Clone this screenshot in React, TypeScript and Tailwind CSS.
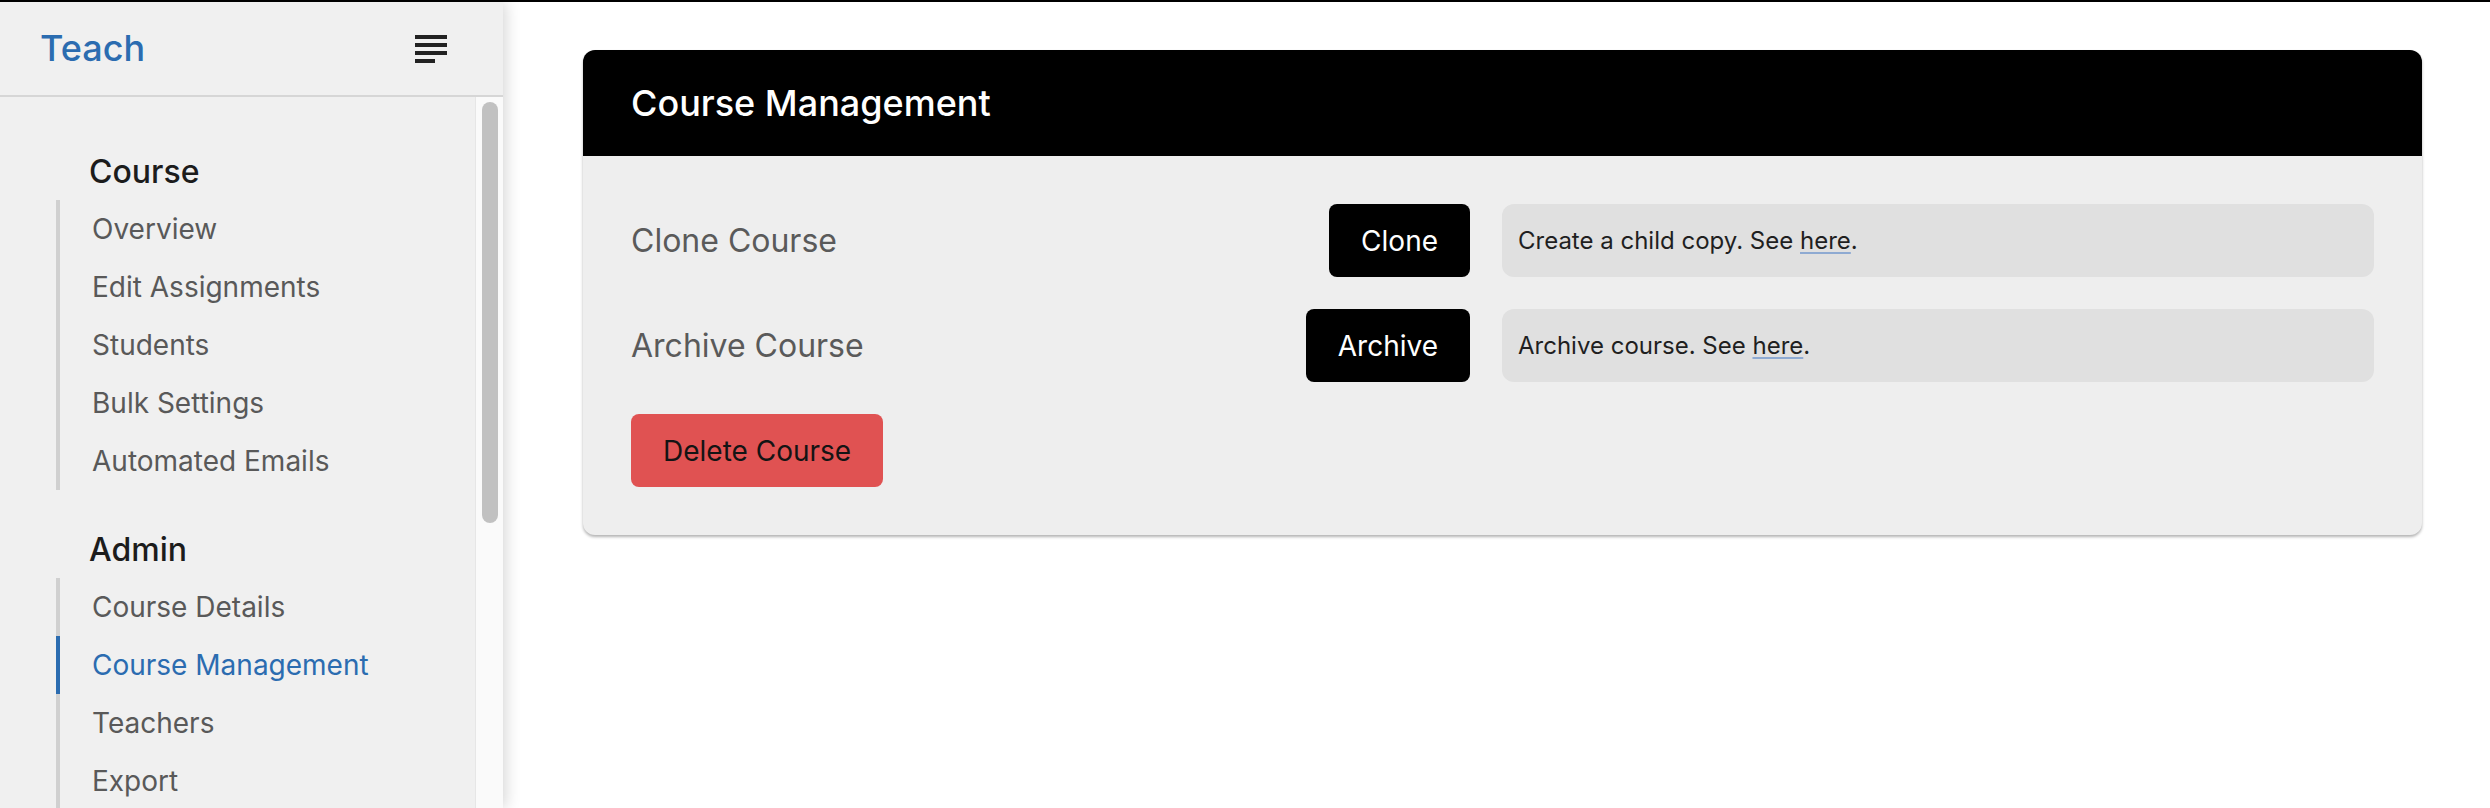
import type { ReactNode } from "react"

const courseLinks = ["Overview", "Edit Assignments", "Students", "Bulk Settings", "Automated Emails"]
const adminLinks = ["Course Details", "Course Management", "Teachers", "Export"]

function SubjectIcon() {
  return (
    <svg viewBox="0 0 24 24" className="h-12 w-12 fill-[#222]">
      <path d="M14 17H4v2h10v-2zm6-8H4v2h16V9zM4 15h16v-2H4v2zM4 5v2h16V5H4z" />
    </svg>
  )
}

function NavSection(props: { title: string; links: string[]; active?: string; first?: boolean }) {
  return (
    <div className={props.first ? "" : "mt-[40px]"}>
      <h2 className="mb-[8px] pl-[33px] text-[32px] leading-[40px] font-medium text-[#1c1c1c]">{props.title}</h2>
      <ul>
        {props.links.map((link) => {
          const active = link === props.active
          return (
            <li
              key={link}
              className={`border-l-4 pl-[32px] text-[28px] leading-[58px] ${active ? "border-[#2b6cb0] text-[#2b6cb0]" : "border-[#d0d0d0] text-[#595959]"}`}
            >
              {link}
            </li>
          )
        })}
      </ul>
    </div>
  )
}

function Sidebar() {
  return (
    <aside className="relative z-10 flex w-[503px] shrink-0 flex-col bg-[#f0f0f0] shadow-[3px_0_14px_rgba(0,0,0,0.16)]">
      <div className="flex h-[95px] shrink-0 items-center justify-between border-b-2 border-[#d6d6d6] pr-[48px] pl-[40px]">
        <span className="-mt-[2px] text-[36px] font-medium text-[#2b6cb0]">Teach</span>
        <SubjectIcon />
      </div>
      <div className="flex min-h-0 flex-1">
        <nav className="flex-1 overflow-hidden pt-[55px] pl-[56px]">
          <NavSection title="Course" links={courseLinks} first />
          <NavSection title="Admin" links={adminLinks} active="Course Management" />
        </nav>
        <div className="w-[28px] shrink-0 border-l border-[#e6e6e6] bg-[#fafafa] pt-[5px]">
          <div className="mx-auto h-[421px] w-[16px] rounded-full bg-[#c1c1c1]" />
        </div>
      </div>
    </aside>
  )
}

function ActionRow(props: { label: string; button: string; children: ReactNode }) {
  return (
    <div className="flex items-center gap-8">
      <span className="flex-1 text-[32px] text-[#5a5a5a]">{props.label}</span>
      <button type="button" className="h-[73px] rounded-lg bg-black px-8 text-[28px] text-white">
        {props.button}
      </button>
      <div className="flex h-[73px] w-[872px] items-center rounded-xl bg-[#e0e0e0] px-4 text-[24px] text-[#1f1f1f]">
        <p>{props.children}</p>
      </div>
    </div>
  )
}

function HereLink() {
  return <a className="underline decoration-[#8eaad2] decoration-2 underline-offset-[3px]">here</a>
}

export default function App() {
  return (
    <div className="flex h-[808px] overflow-hidden border-t-2 border-black bg-white font-['Inter','Liberation_Sans',sans-serif]">
      <Sidebar />
      <main className="flex-1 pt-[48px] pr-[68px] pl-[80px]">
        <section className="rounded-xl bg-[#eeeeee] shadow-[0_2px_3px_rgba(0,0,0,0.3)]">
          <header className="flex h-[106px] items-center rounded-t-xl bg-black px-12">
            <h1 className="text-[36px] font-medium text-white">Course Management</h1>
          </header>
          <div className="flex flex-col gap-8 p-12">
            <ActionRow label="Clone Course" button="Clone">
              Create a child copy. See <HereLink />.
            </ActionRow>
            <ActionRow label="Archive Course" button="Archive">
              Archive course. See <HereLink />.
            </ActionRow>
            <div>
              <button type="button" className="h-[73px] rounded-lg bg-[#e05252] px-8 text-[28px] text-[#141414]">
                Delete Course
              </button>
            </div>
          </div>
        </section>
      </main>
    </div>
  )
}
